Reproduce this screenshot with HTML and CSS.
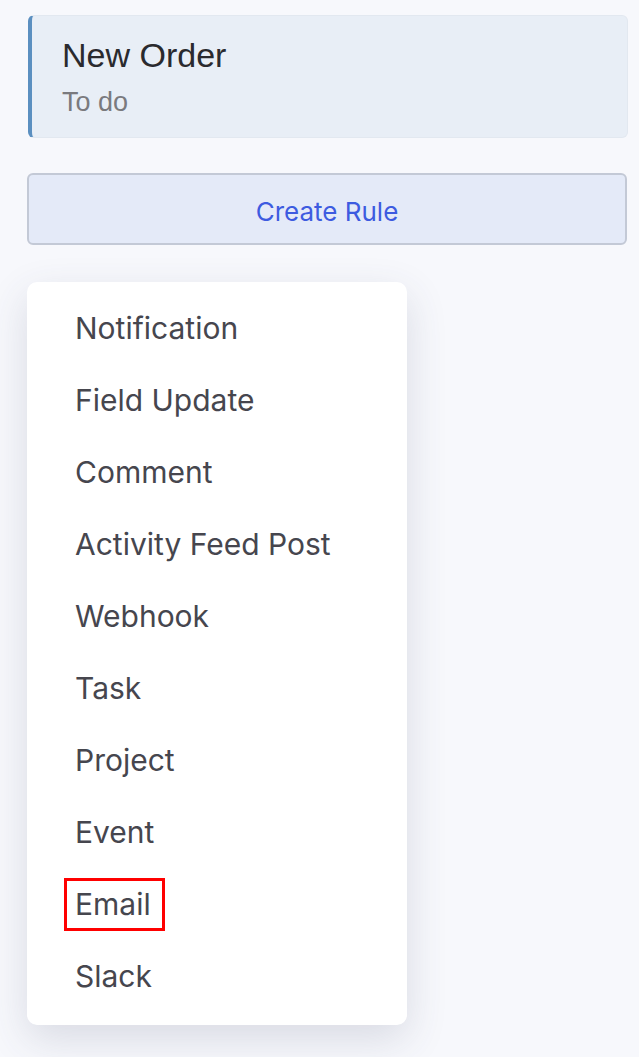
FILE: index.html
```html
<!DOCTYPE html>
<html lang="en">

<head>
    <meta charset="utf-8" />
    <meta name="viewport" content="width=device-width, initial-scale=1">
    <title>Automation rules</title>
    <link rel="stylesheet" href="styles.css">
</head>

<body>
    <main>
        <section class="stage-card">
            <h2>New Order</h2>
            <p>To do</p>
        </section>

        <button class="create-rule">Create Rule</button>

        <ul class="rule-menu">
            <li>Notification</li>
            <li>Field Update</li>
            <li>Comment</li>
            <li>Activity Feed Post</li>
            <li>Webhook</li>
            <li>Task</li>
            <li>Project</li>
            <li>Event</li>
            <li><span class="highlight">Email</span></li>
            <li>Slack</li>
        </ul>
    </main>
</body>

</html>
```

FILE: styles.css
```css
:root {
    --bg-color: #f7f8fc;
    --card-bg: #e8eef6;
    --card-accent: #5b8fc0;
    --btn-bg: #e4eaf8;
    --btn-border: #c3c9d6;
    --link-color: #3d5be0;
    --text-color: #2a2a2e;
    --muted-color: #7a7a7e;
    --menu-text: #46464e;
}

html,
body {
    background-color: var(--bg-color);
}

body {
    margin: 0;
    font-family: Inter, 'Noto Sans', sans-serif;
}

main {
    min-height: 100vh;
    box-sizing: border-box;
    padding: 15px 12px 0 27px;
    display: flex;
    flex-direction: column;
    align-items: flex-start;
}

.stage-card {
    box-sizing: border-box;
    width: 600px;
    height: 123px;
    margin-left: 1px;
    padding: 19px 30px;
    background-color: var(--card-bg);
    border: 1px solid #e2e8f0;
    border-left: 4px solid var(--card-accent);
    border-radius: 6px;
}

.stage-card h2 {
    margin: 0;
    font-family: 'Liberation Sans', Arial, sans-serif;
    font-size: 34px;
    font-weight: 400;
    line-height: 40px;
    color: var(--text-color);
}

.stage-card p {
    margin: 12px 0 0;
    font-family: 'Liberation Sans', Arial, sans-serif;
    font-size: 27px;
    line-height: 30px;
    color: var(--muted-color);
}

.create-rule {
    box-sizing: border-box;
    width: 600px;
    height: 72px;
    margin-top: 35px;
    padding-top: 5px;
    background-color: var(--btn-bg);
    border: 2px solid var(--btn-border);
    border-radius: 6px;
    font-family: Inter, sans-serif;
    font-size: 26px;
    color: var(--link-color);
}

.rule-menu {
    box-sizing: border-box;
    width: 380px;
    margin: 37px 0 0;
    padding: 10px 0 13px 48px;
    list-style: none;
    background-color: #fff;
    border-radius: 10px;
    box-shadow: 0 14px 40px rgba(60, 66, 100, 0.16);
}

.rule-menu li {
    height: 72px;
    display: flex;
    align-items: center;
    font-size: 30px;
    color: var(--menu-text);
}

.highlight {
    margin-left: -11px;
    padding: 0 11px 0 8px;
    border: 3px solid #f00;
    line-height: 47px;
}
```
